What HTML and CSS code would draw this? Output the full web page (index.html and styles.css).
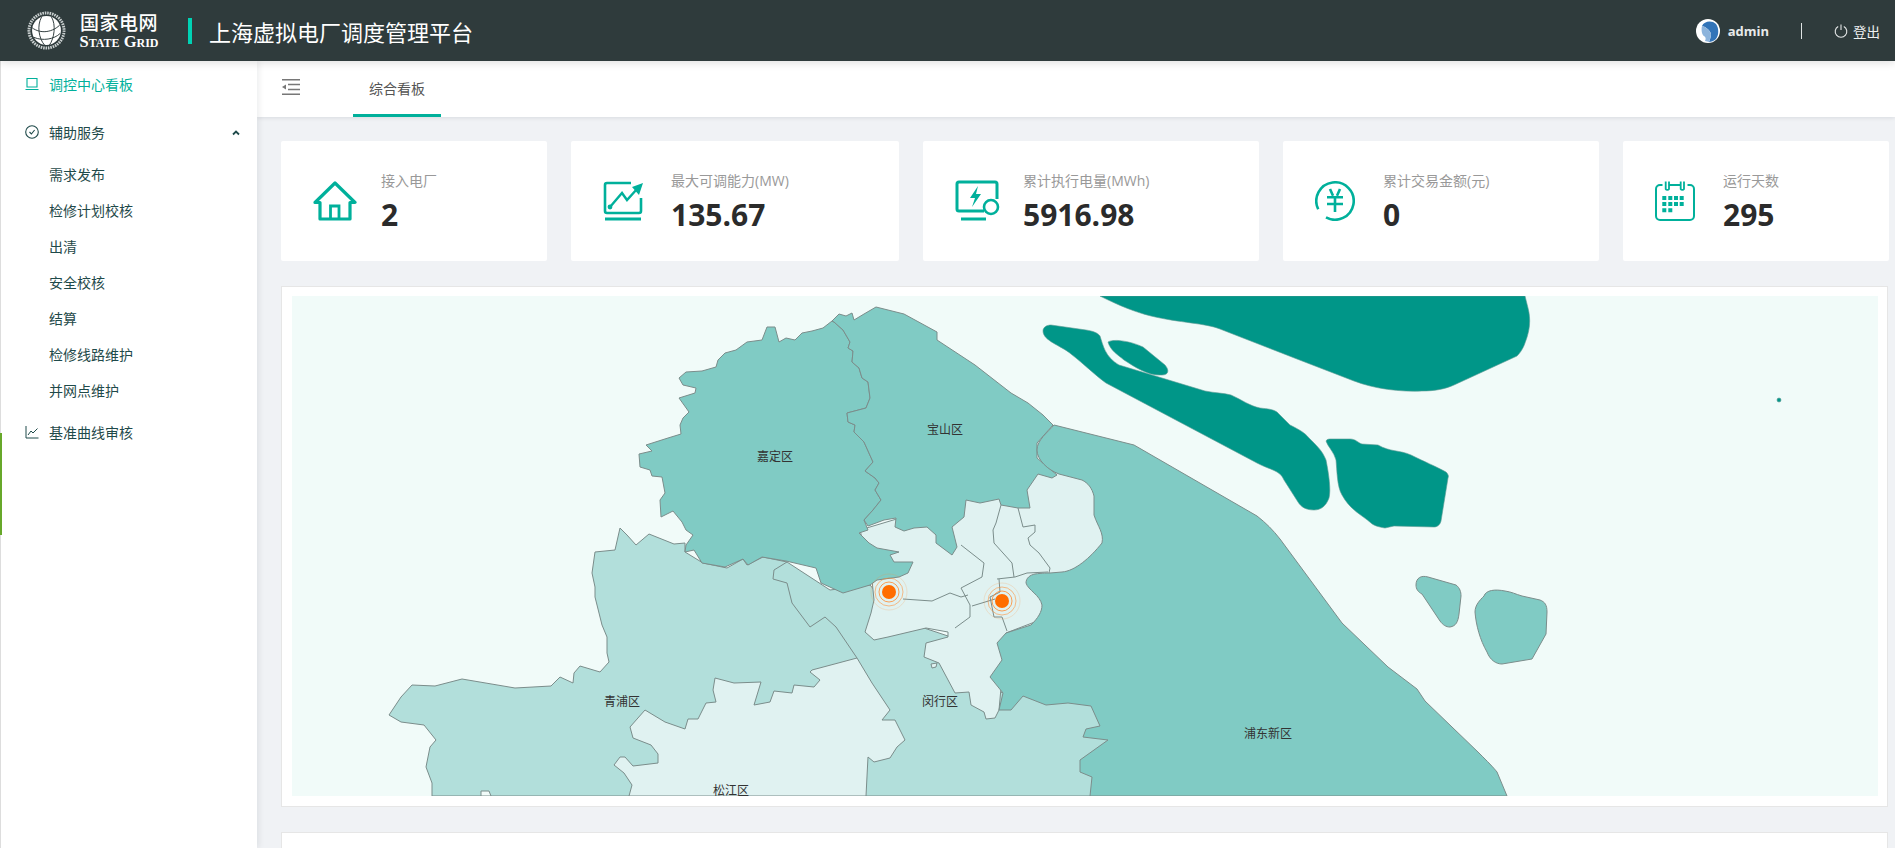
FILE: index.html
```html
<!DOCTYPE html>
<html lang="zh-CN">

<head>
    <meta charset="UTF-8">
    <meta name="viewport" content="width=device-width, initial-scale=1.0">
    <title>上海虚拟电厂调度管理平台</title>
    <link rel="stylesheet" href="styles.css">
</head>

<body>

    <!-- Top header -->
    <header class="header">
        <div class="logo">
            <svg class="logo-globe" viewBox="0 0 40 40">
                <circle cx="20" cy="20" r="18" fill="none" stroke="#c9cfcf" stroke-width="3" stroke-dasharray="1.6 .9"/>
                <circle cx="20" cy="20" r="14.800" fill="#fff"/>
                <path d="M5 17C14 24 27 22 35 13M7 27C16 31 28 29 34 23M15 6C10 15 12 28 18 35M25 6C30 14 28 28 23 35" fill="none" stroke="#2f3c3d" stroke-width="1"/>
            </svg>
            <div class="logo-text">
                <span class="logo-cn">国家电网</span>
                <span class="logo-en">State Grid</span>
            </div>
        </div>
        <div class="title-bar"></div>
        <div class="title">上海虚拟电厂调度管理平台</div>
        <div class="user">
            <svg class="avatar" viewBox="0 0 24 24">
                <circle cx="12" cy="12" r="12" fill="#fff"/>
                <path d="M6 7C8 2 16 1 20 5C23 9 23 16 20 20C18 22 15 23 13 23C14 20 15 18 15 15C14 11 10 8 6 7Z" fill="#3274b8"/>
                <path d="M6 7C10 8 14 11 15 15C15 18 14 20 13 23L9 22C10 20 10 18 8 17C6 16 5 11 6 7Z" fill="#8db4dc"/>
            </svg>
            <span class="user-name">admin</span>
            <span class="user-divider"></span>
            <svg class="power" viewBox="0 0 14 14">
                <path d="M4.200 2.400A5.800 5.800 0 1 0 9.800 2.400M7 .5V6" fill="none" stroke="#e6e8e8" stroke-width="1.100"/>
            </svg>
            <span class="logout">登出</span>
        </div>
    </header>

    <div class="layout">

        <!-- Sidebar -->
        <aside class="sidebar">
            <div class="menu-item active">
                <svg class="menu-icon" viewBox="0 0 14 14">
                    <path d="M2 1.500H12V10H2ZM.5 12.500H13.500" fill="none" stroke="currentColor" stroke-width="1.100"/>
                </svg>
                调控中心看板
            </div>
            <div class="menu-item">
                <svg class="menu-icon" viewBox="0 0 14 14">
                    <circle cx="7" cy="7" r="6.300" fill="none" stroke="currentColor" stroke-width="1.100"/>
                    <path d="M4.500 7L6.400 9L9.600 5" fill="none" stroke="currentColor" stroke-width="1.100"/>
                </svg>
                辅助服务
                <svg class="chevron" viewBox="0 0 8 6">
                    <path d="M1 4.500L4 1.500L7 4.500" fill="none" stroke="currentColor" stroke-width="1.800"/>
                </svg>
            </div>
            <div class="submenu">
                <div class="submenu-item">需求发布</div>
                <div class="submenu-item">检修计划校核</div>
                <div class="submenu-item">出清</div>
                <div class="submenu-item">安全校核</div>
                <div class="submenu-item">结算</div>
                <div class="submenu-item">检修线路维护</div>
                <div class="submenu-item">并网点维护</div>
            </div>
            <div class="menu-item">
                <svg class="menu-icon" viewBox="0 0 14 14">
                    <path d="M1 1V13H13.500M3 10L6 6L8 8L12.500 3.500" fill="none" stroke="currentColor" stroke-width="1"/>
                </svg>
                基准曲线审核
            </div>
            <div class="side-strip"></div>
        </aside>

        <main class="main">
            <!-- Tab bar -->
            <div class="tabbar">
                <svg class="collapse" viewBox="0 0 18 16">
                    <path d="M0 .8H18M6 5.500H18M6 10.500H18M0 15.200H18" fill="none" stroke="#777" stroke-width="1.500"/>
                    <path d="M0 8L4 5.500V10.500Z" fill="#777"/>
                </svg>
                <div class="tab">综合看板</div>
            </div>

            <div class="content">
                <!-- Stat cards -->
                <section class="stats">
                    <div class="stat-card">
                        <div class="stat-icon">
                            <svg viewBox="0 0 44 40" width="44" height="40">
                                <path d="M2 21.500L22 2L42 21.500H37V38H7V21.500Z" fill="none" stroke="#00b09b" stroke-width="3.200" stroke-linejoin="round"/>
                                <path d="M17.500 38V25H26V38" fill="none" stroke="#00b09b" stroke-width="2.800"/>
                            </svg>
                        </div>
                        <div class="stat-text">
                            <div class="stat-label">接入电厂</div>
                            <div class="stat-value">2</div>
                        </div>
                    </div>
                    <div class="stat-card">
                        <div class="stat-icon">
                            <svg viewBox="0 0 42 42" width="42" height="42">
                                <path d="M28 3H4A2 2 0 0 0 2 5V31A2 2 0 0 0 4 33H36A2 2 0 0 0 38 31V18" fill="none" stroke="#00b09b" stroke-width="2.600"/>
                                <path d="M7 27L19 13L24 20L34 9" fill="none" stroke="#00b09b" stroke-width="2.400"/>
                                <circle cx="7" cy="27" r="2.400" fill="#00b09b"/>
                                <path d="M40 3L29 7L36 15Z" fill="#00b09b"/>
                                <path d="M2 39H38" stroke="#00b09b" stroke-width="2.800"/>
                            </svg>
                        </div>
                        <div class="stat-text">
                            <div class="stat-label">最大可调能力(MW)</div>
                            <div class="stat-value">135.67</div>
                        </div>
                    </div>
                    <div class="stat-card">
                        <div class="stat-icon">
                            <svg viewBox="0 0 46 42" width="46" height="42">
                                <path d="M29 31H4A2 2 0 0 1 2 29V4A2 2 0 0 1 4 2H40A2 2 0 0 1 42 4V19" fill="none" stroke="#00b09b" stroke-width="3"/>
                                <circle cx="36" cy="27" r="7" fill="none" stroke="#00b09b" stroke-width="2.600"/>
                                <path d="M23 6L15 18H20L17 27L26 14H21Z" fill="#00b09b"/>
                                <path d="M6 39H31" stroke="#00b09b" stroke-width="3"/>
                            </svg>
                        </div>
                        <div class="stat-text">
                            <div class="stat-label">累计执行电量(MWh)</div>
                            <div class="stat-value">5916.98</div>
                        </div>
                    </div>
                    <div class="stat-card">
                        <div class="stat-icon">
                            <svg viewBox="0 0 40 40" width="40" height="40">
                                <path d="M3.200 28.200A18.700 18.700 0 1 1 11 36.400" fill="none" stroke="#00b09b" stroke-width="2.600"/>
                                <path d="M15 8L18 14.700M25 8L22 14.700M12 16.300H28M12 23H28M20 16.300V31" fill="none" stroke="#00b09b" stroke-width="2.600"/>
                            </svg>
                        </div>
                        <div class="stat-text">
                            <div class="stat-label">累计交易金额(元)</div>
                            <div class="stat-value">0</div>
                        </div>
                    </div>
                    <div class="stat-card">
                        <div class="stat-icon">
                            <svg viewBox="0 0 40 40" width="40" height="40">
                                <path d="M7.500 4H5A4 4 0 0 0 1 8V35A4 4 0 0 0 5 39H35A4 4 0 0 0 39 35V8A4 4 0 0 0 35 4H32.500M14 4H26" fill="none" stroke="#00b09b" stroke-width="2"/>
                                <path d="M10.700 .5V8A1.900 1.900 0 0 0 14 8V.5M25.700 .5V8A1.900 1.900 0 0 0 29 8V.5" fill="none" stroke="#00b09b" stroke-width="1.800"/>
                                <path d="M7.300 15H11.300V19H7.300ZM13.300 15H17.300V19H13.300ZM19 15H23V19H19ZM24.700 15H28.700V19H24.700ZM7.300 21H11.300V25H7.300ZM13.300 21H17.300V25H13.300ZM19 21H23V25H19ZM24.700 21H28.700V25H24.700ZM7.300 27.300H11.300V31.300H7.300ZM13.300 27.300H17.300V31.300H13.300Z" fill="#00b09b"/>
                            </svg>
                        </div>
                        <div class="stat-text">
                            <div class="stat-label">运行天数</div>
                            <div class="stat-value">295</div>
                        </div>
                    </div>
                </section>

                <!-- Shanghai map -->
                <section class="map-card">
                    <svg class="map" viewBox="292 296 1586 500">
                        <g class="area">
                            <!-- Qingpu and Minhang -->
                            <path fill="#b2dfdb" d="M620 528L627 535L636 545L649 534L674 544L685 543L685 552L703 563L727 568L743 559L747 565L763 557L787 562L830 590L870 585L900 620L960 640L990 700L1020 680L1110 700L1110 796L432 796L432 783L426 767L430 747L436 740L424 725L401 722L389 715L401 697L412 685L435 686L462 679L515 688L551 686L560 677L573 683L574 673L580 666L600 672L609 662L607 653L607 637L602 625L595 597L595 587L592 573L595 552L615 550Z"/>
                            <path fill="none" d="M787 562L774 570L773 579L787 583L792 603L810 627L825 617L836 627L857 658"/>
                            <path fill="#f1fbf9" d="M481 796L481 791L489 791L491 796Z"/>
                            <path fill="#e0f2f1" d="M931 664L937 663L936 667L932 668Z"/>
                            <!-- Songjiang -->
                            <path fill="#e0f2f1" d="M812 670L857 658L872 683L890 710L882 720L895 720L905 740L897 747L890 758L874 762L868 757L866 796L629 796L632 785L624 773L614 765L620 757L625 757L633 766L658 763L658 754L651 745L633 738L630 727L645 710L665 722L685 729L688 719L698 719L706 703L716 702L713 690L715 678L734 683L761 682L754 705L770 702L774 691L792 693L794 685L814 687L820 680L810 672Z"/>
                            <!-- Inner districts -->
                            <path fill="#e0f2f1" d="M860 530L960 500L1018 480L1040 470L1062 465L1120 490L1120 560L1040 620L1006 633L999 710L995 718L986 719L984 712L971 705L969 692L955 693L939 663L924 657L926 643L948 637L948 632L926 628L888 637L874 640L865 632L871 613L874 600L872 580Z"/>
                            <path fill="none" d="M1001 505L996 523L993 530L994 543L1012 563L1014 577"/>
                            <path fill="none" d="M1018 508L1023 527L1035 525L1035 532L1028 538L1030 545L1039 553L1050 568L1049 573"/>
                            <path fill="none" d="M961 545L984 563L982 577L961 588L970 605L970 617L955 628"/>
                            <path fill="none" d="M903 599L932 601L950 593L961 597L968 595M972 606L995 599"/>
                            <path fill="none" d="M999 579L1000 592L990 597L994 617L1002 617L1007 631"/>
                            <path fill="none" d="M997 579L1015 577L1027 573L1048 572"/>
                            <!-- Jiading -->
                            <path fill="#80cbc4" d="M832 321L823 328L812 331L802 333L795 340L786 338L779 342L775 327L767 327L762 340L747 342L736 350L725 353L718 360L716 367L702 371L686 372L679 378L683 385L696 388L695 393L679 398L689 412L683 418L680 425L681 434L668 438L646 445L652 451L639 454L640 467L650 470L652 476L662 477L665 493L660 500L661 517L673 511L682 522L686 530L693 535L686 545L685 552L694 550L702 563L725 567L743 559L748 565L762 557L786 561L816 568L821 583L843 593L870 585L877 580L899 577L908 573L913 562L894 562L890 555L899 552L877 548L869 543L859 533L868 530L864 520L873 510L881 500L875 490L879 483L875 478L865 471L873 462L864 442L854 432L855 425L848 422L847 413L866 408L870 398L868 382L862 378L859 368L852 362L853 351L848 348L850 342L843 330L834 322Z"/>
                            <!-- Baoshan -->
                            <path fill="#80cbc4" d="M832 321L839 314L846 316L852 313L854 320L864 314L876 307L904 314L937 332L937 340L975 365L1011 393L1028 403L1043 415L1053 425L1037 443L1037 458L1057 475L1052 478L1038 474L1027 490L1030 508L1018 508L1001 505L999 499L980 503L966 500L964 517L952 527L957 547L952 555L936 543L936 535L927 527L914 528L904 531L895 527L896 518L884 520L868 526L864 520L873 510L881 500L875 490L879 483L875 478L865 471L873 462L864 442L854 432L855 425L848 422L847 413L866 408L870 398L868 382L862 378L859 368L852 362L853 351L848 348L850 342L843 330L834 322Z"/>
                            <!-- Pudong -->
                            <path fill="#80cbc4" d="M1054 425L1134 445L1257 516C1266 523 1273 530 1280 539L1342 623L1388 667L1417 689L1425 701L1479 753C1488 762 1493 767 1497 772L1507 796L1090 796L1092 777L1080 772L1080 760L1108 740L1083 737L1086 729L1100 726L1091 706L1068 703L1046 705L1023 696L1011 710L999 710L1003 693L990 677L1002 660L997 643L1006 633L1031 625C1038 618 1042 612 1042 605C1040 595 1028 590 1026 583C1026 578 1030 575 1035 574C1042 573 1048 573 1050 573L1062 572C1075 571 1090 558 1102 543C1104 533 1098 527 1094 515L1094 496C1092 488 1088 483 1082 480L1059 474C1048 470 1037 460 1037 450C1037 440 1048 432 1054 425Z"/>
                            <path fill="#80cbc4" d="M1416 585C1416 578 1421 575 1428 577L1456 585C1460 588 1461 592 1461 596L1459 614C1458 622 1456 626 1450 627C1446 627 1443 625 1440 621L1422 594C1418 592 1416 589 1416 585Z"/>
                            <path fill="#80cbc4" d="M1484 596C1486 590 1495 589 1505 591C1512 592 1515 594 1522 596L1540 600C1545 602 1547 605 1547 612L1546 634L1532 659L1502 664C1496 664 1490 660 1487 652C1480 640 1476 625 1475 612C1475 605 1480 600 1484 596Z"/>
                            <!-- Chongming and Changxing -->
                            <path class="island" d="M1100 296C1120 306 1135 312 1151 316C1180 323 1205 323 1220 329L1297 359L1354 381C1375 389 1400 392 1422 391C1435 391 1445 389 1454 385L1517 356C1523 350 1525 343 1525 343C1530 330 1531 320 1528 308L1525 296Z"/>
                            <path class="island" d="M1043 331C1043 327 1047 325 1051 325L1086 330C1093 331 1098 333 1100 336C1103 345 1105 357 1119 365L1205 391C1215 393 1224 393 1231 395C1242 400 1250 406 1260 408C1268 409 1272 409 1277 412L1290 425C1300 430 1305 433 1309 438C1316 445 1322 450 1326 460C1329 475 1331 490 1329 498C1326 506 1321 510 1314 510C1306 510 1301 507 1298 502L1284 480C1280 470 1270 470 1257 463L1106 383C1095 375 1085 365 1071 354C1062 346 1043 341 1043 331Z"/>
                            <path class="island" d="M1108 342C1112 339 1128 340 1143 347L1165 365C1170 371 1168 375 1162 375C1148 376 1135 367 1124 360C1118 355 1110 350 1108 342Z"/>
                            <path class="island" d="M1326 441C1327 439 1329 439 1331 439L1350 439C1356 439 1358 443 1362 444L1378 445C1390 452 1400 450 1411 455C1425 462 1435 466 1446 472C1448 474 1449 476 1448 478L1441 521C1440 525 1437 527 1434 527L1394 526L1385 528C1378 527 1373 525 1371 523C1362 515 1350 510 1342 495C1337 487 1337 470 1336 460C1334 452 1328 447 1326 441Z"/>
                            <circle class="island" cx="1779" cy="400" r="2"/>
                        </g>

                        <text class="map-label" x="775" y="461">嘉定区</text>
                        <text class="map-label" x="945" y="434">宝山区</text>
                        <text class="map-label" x="622" y="706">青浦区</text>
                        <text class="map-label" x="940" y="706">闵行区</text>
                        <text class="map-label" x="731" y="795">松江区</text>
                        <text class="map-label" x="1268" y="738">浦东新区</text>

                        <g class="pin">
                            <circle cx="889" cy="592" r="18" stroke-opacity=".2"/>
                            <circle cx="889" cy="592" r="14" stroke-opacity=".55"/>
                            <circle cx="889" cy="592" r="10" stroke-opacity=".8"/>
                            <circle class="pin-dot" cx="889" cy="592" r="7"/>
                        </g>
                        <g class="pin">
                            <circle cx="1002" cy="601" r="18" stroke-opacity=".2"/>
                            <circle cx="1002" cy="601" r="14" stroke-opacity=".55"/>
                            <circle cx="1002" cy="601" r="10" stroke-opacity=".8"/>
                            <circle class="pin-dot" cx="1002" cy="601" r="7"/>
                        </g>
                    </svg>
                </section>

                <section class="bottom-card"></section>
            </div>
        </main>
    </div>

</body>

</html>
```

FILE: styles.css
```css
/* Global Reset */
* {
    margin: 0;
    padding: 0;
    box-sizing: border-box;
}

/* Body */
body {
    font-family: "Open Sans", "Noto Sans CJK SC", sans-serif;
    font-size: 14px;
    background-color: #f0f2f5;
    color: #333;
    height: 100vh;
    overflow: hidden;
}

/* Header */
.header {
    display: flex;
    align-items: center;
    height: 61px;
    padding: 0 15px 0 27px;
    background-color: #2f3b3c;
    color: #fff;
    position: relative;
    z-index: 3;
    box-shadow: 0 2px 8px rgba(0, 0, 0, 0.12);
}

.logo {
    display: flex;
    align-items: center;
}

.logo-globe {
    width: 39px;
    height: 39px;
    margin-right: 14px;
}

.logo-text {
    display: flex;
    flex-direction: column;
    align-items: center;
    width: 78px;
}

.logo-cn {
    font-size: 19px;
    line-height: 22px;
    font-weight: 500;
    letter-spacing: 0.5px;
}

.logo-en {
    font-family: "Liberation Serif", serif;
    font-size: 16.5px;
    line-height: 15px;
    font-variant: small-caps;
    font-weight: bold;
    text-transform: capitalize;
    white-space: nowrap;
}

.title-bar {
    width: 4px;
    height: 26px;
    margin-left: 30px;
    background-color: #00d2b4;
}

.title {
    margin-left: 17px;
    font-size: 22px;
}

.user {
    display: flex;
    align-items: center;
    margin-left: auto;
}

.avatar {
    width: 24px;
    height: 24px;
    margin-right: 8px;
}

.user-name {
    font-size: 13px;
    font-weight: bold;
    color: #e8eaea;
}

.user-divider {
    width: 1px;
    height: 16px;
    margin: 0 32px;
    background-color: #dfe3e3;
}

.power {
    width: 14px;
    height: 14px;
    margin-right: 5px;
}

.logout {
    font-size: 13.5px;
    color: #eef0f0;
}

/* Layout */
.layout {
    display: flex;
    height: calc(100vh - 61px);
}

/* Sidebar */
.sidebar {
    width: 257px;
    flex-shrink: 0;
    border-left: 1px solid #ddd;
    background-color: #fff;
    color: #1f4a4a;
    position: relative;
    z-index: 2;
    box-shadow: 2px 0 6px rgba(0, 21, 41, 0.08);
}

.menu-item {
    display: flex;
    align-items: center;
    height: 48px;
    padding: 0 17px 2px 24px;
}

.menu-item .chevron {
    margin-top: 2px;
}

.menu-item.active {
    color: #00b09b;
}

.menu-icon {
    width: 14px;
    height: 14px;
    margin-right: 10px;
}

.chevron {
    width: 8px;
    height: 6px;
    margin-left: auto;
}

.submenu-item {
    height: 36px;
    line-height: 36px;
    padding-left: 48px;
}

.side-strip {
    position: absolute;
    left: -1px;
    top: 372px;
    width: 2px;
    height: 102px;
    background-color: #67a82a;
}

/* Main area */
.main {
    flex: 1;
    min-width: 0;
}

.tabbar {
    display: flex;
    height: 56px;
    padding-left: 25px;
    background-color: #fff;
    box-shadow: 0 1px 4px rgba(0, 21, 41, 0.1);
}

.collapse {
    width: 18px;
    height: 16px;
    margin-top: 18px;
}

.tab {
    width: 88px;
    margin-left: 53px;
    padding-top: 17px;
    text-align: center;
    color: #555;
    border-bottom: 3px solid #00b09b;
}

.content {
    padding: 24px 6px 0 24px;
}

/* Stat Cards */
.stats {
    display: grid;
    grid-template-columns: 266px 328px 336px 316px 266px;
    gap: 24px;
}

.stat-card {
    display: flex;
    align-items: center;
    height: 120px;
    padding-left: 32px;
    background-color: #fff;
    border-radius: 2px;
}

.stat-icon {
    display: flex;
    width: 68px;
    flex-shrink: 0;
}

.stat-text {
    padding-top: 4px;
}

.stat-label {
    font-size: 14px;
    line-height: 20px;
    color: #999;
}

.stat-value {
    margin-top: 3px;
    font-size: 30px;
    line-height: 42px;
    font-weight: bold;
    color: #2b2b2b;
}

/* Map */
.map-card {
    margin: 25px 1px 0 0;
    padding: 9px 9px 10px 10px;
    background-color: #fff;
    border: 1px solid #e6e6e6;
}

.map {
    display: block;
    width: 1586px;
    height: 500px;
    background-color: #f1fbf9;
}

.area path {
    stroke: #7b8d8b;
    stroke-width: 1;
    stroke-linejoin: round;
}

.area .island {
    fill: #009688;
    stroke: #5d9a93;
    stroke-width: 0.6;
}

.map-label {
    font-size: 12px;
    fill: #333;
    text-anchor: middle;
}

.pin circle {
    fill: none;
    stroke: #ff8a30;
    stroke-width: 1;
}

.pin .pin-dot {
    fill: #ff6d00;
    stroke: none;
}

.bottom-card {
    height: 16px;
    margin: 25px 1px 0 0;
    background-color: #fff;
    border: 1px solid #e6e6e6;
    border-bottom: none;
}
```
